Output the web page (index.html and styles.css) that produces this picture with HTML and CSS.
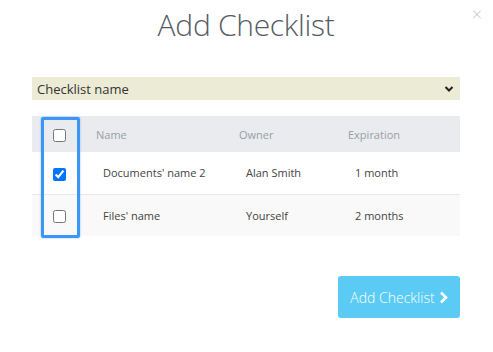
FILE: index.html
```html
<!DOCTYPE html>
<html>
<head>
<meta charset="utf-8">
<link rel="stylesheet" href="styles.css">
</head>
<body>
<div class="modal">
  <div class="modal-head">
    <h1 class="title">Add Checklist</h1>
    <span class="close">&times;</span>
  </div>
  <div class="select">
    <span class="select-label">Checklist name</span>
    <svg class="chev" width="10" height="8" viewBox="0 0 10 8"><path d="M1.5 2 L5 5.5 L8.5 2" fill="none" stroke="#222" stroke-width="2"/></svg>
  </div>
  <div class="table-wrap">
    <table class="grid">
      <colgroup>
        <col class="c-check"><col class="c-name"><col class="c-owner"><col class="c-exp">
      </colgroup>
      <thead>
        <tr class="head-row">
          <th class="cb"><input type="checkbox"></th>
          <th>Name</th>
          <th>Owner</th>
          <th>Expiration</th>
        </tr>
      </thead>
      <tbody>
        <tr class="row row-a">
          <td class="cb"><input type="checkbox" checked></td>
          <td>Documents' name 2</td>
          <td>Alan Smith</td>
          <td>1 month</td>
        </tr>
        <tr class="row row-b">
          <td class="cb"><input type="checkbox"></td>
          <td>Files' name</td>
          <td>Yourself</td>
          <td>2 months</td>
        </tr>
      </tbody>
    </table>
    <div class="highlight"></div>
  </div>
  <div class="footer">
    <button class="btn">Add Checklist <svg class="btn-chev" width="9" height="13" viewBox="0 0 9 13"><path d="M2 1.5 L7 6.5 L2 11.5" fill="none" stroke="#fff" stroke-width="2.6"/></svg></button>
  </div>
</div>
</body>
</html>
```

FILE: styles.css
```css
html, body {
  margin: 0;
  padding: 0;
  background: #fff;
}
body {
  font-family: "Open Sans", "Noto Sans", sans-serif;
  color: #444;
}
.modal {
  width: 493px;
  height: 352px;
  box-sizing: border-box;
  padding: 0 33px 0 32px;
  position: relative;
}
.modal-head {
  height: 77px;
  display: flex;
  justify-content: center;
}
.title {
  margin: 4px 0 0 0;
  font-weight: 300;
  font-size: 30px;
  line-height: 42px;
  color: #555b62;
  letter-spacing: -0.3px;
}
.close {
  position: absolute;
  right: 11px;
  top: 2px;
  font-size: 18px;
  color: #c8c8c8;
  font-weight: 300;
}
.select {
  height: 23px;
  background: #ecebd5;
  display: flex;
  align-items: center;
  justify-content: space-between;
  padding: 0 6px 0 5px;
  font-size: 13px;
  color: #333;
}
.chev { display: block; }
.table-wrap {
  position: relative;
  margin-top: 16px;
}
.grid {
  width: 428px;
  border-collapse: collapse;
  table-layout: fixed;
  font-size: 11px;
}
.c-check { width: 54px; }
.c-name { width: 143px; }
.c-owner { width: 109px; }
.c-exp { width: 122px; }
.head-row {
  background: #e9ebef;
  height: 36px;
}
.head-row th {
  text-align: left;
  font-weight: 400;
  color: #9a9ea4;
  padding: 0 0 0 10px;
}
.grid .cb {
  padding: 0;
  text-align: center;
}
.grid input {
  margin: 0;
  width: 13px;
  height: 13px;
  vertical-align: middle;
}
.row td {
  padding: 0 0 0 17px;
  color: #444;
}
.row-a {
  height: 42px;
  background: #fff;
  border-bottom: 1px solid #e6e8ec;
}
.row-b {
  height: 42px;
  background: #f9f9f9;
}
.highlight {
  position: absolute;
  left: 9px;
  top: 1px;
  width: 33px;
  height: 115px;
  border: 3px solid #3b97f5;
  border-radius: 2px;
  box-shadow: 0 0 2px rgba(40, 120, 220, 0.5);
}
.footer {
  display: flex;
  justify-content: flex-end;
  margin-top: 40px;
}
.btn {
  width: 122px;
  height: 42px;
  background: #5bcbf5;
  border: none;
  border-radius: 3px;
  color: #fff;
  font-family: "Open Sans", "Noto Sans", sans-serif;
  font-size: 14px;
  font-weight: 300;
  display: flex;
  align-items: center;
  justify-content: center;
  gap: 4px;
  padding: 0;
}
.btn-chev { display: block; }
```
